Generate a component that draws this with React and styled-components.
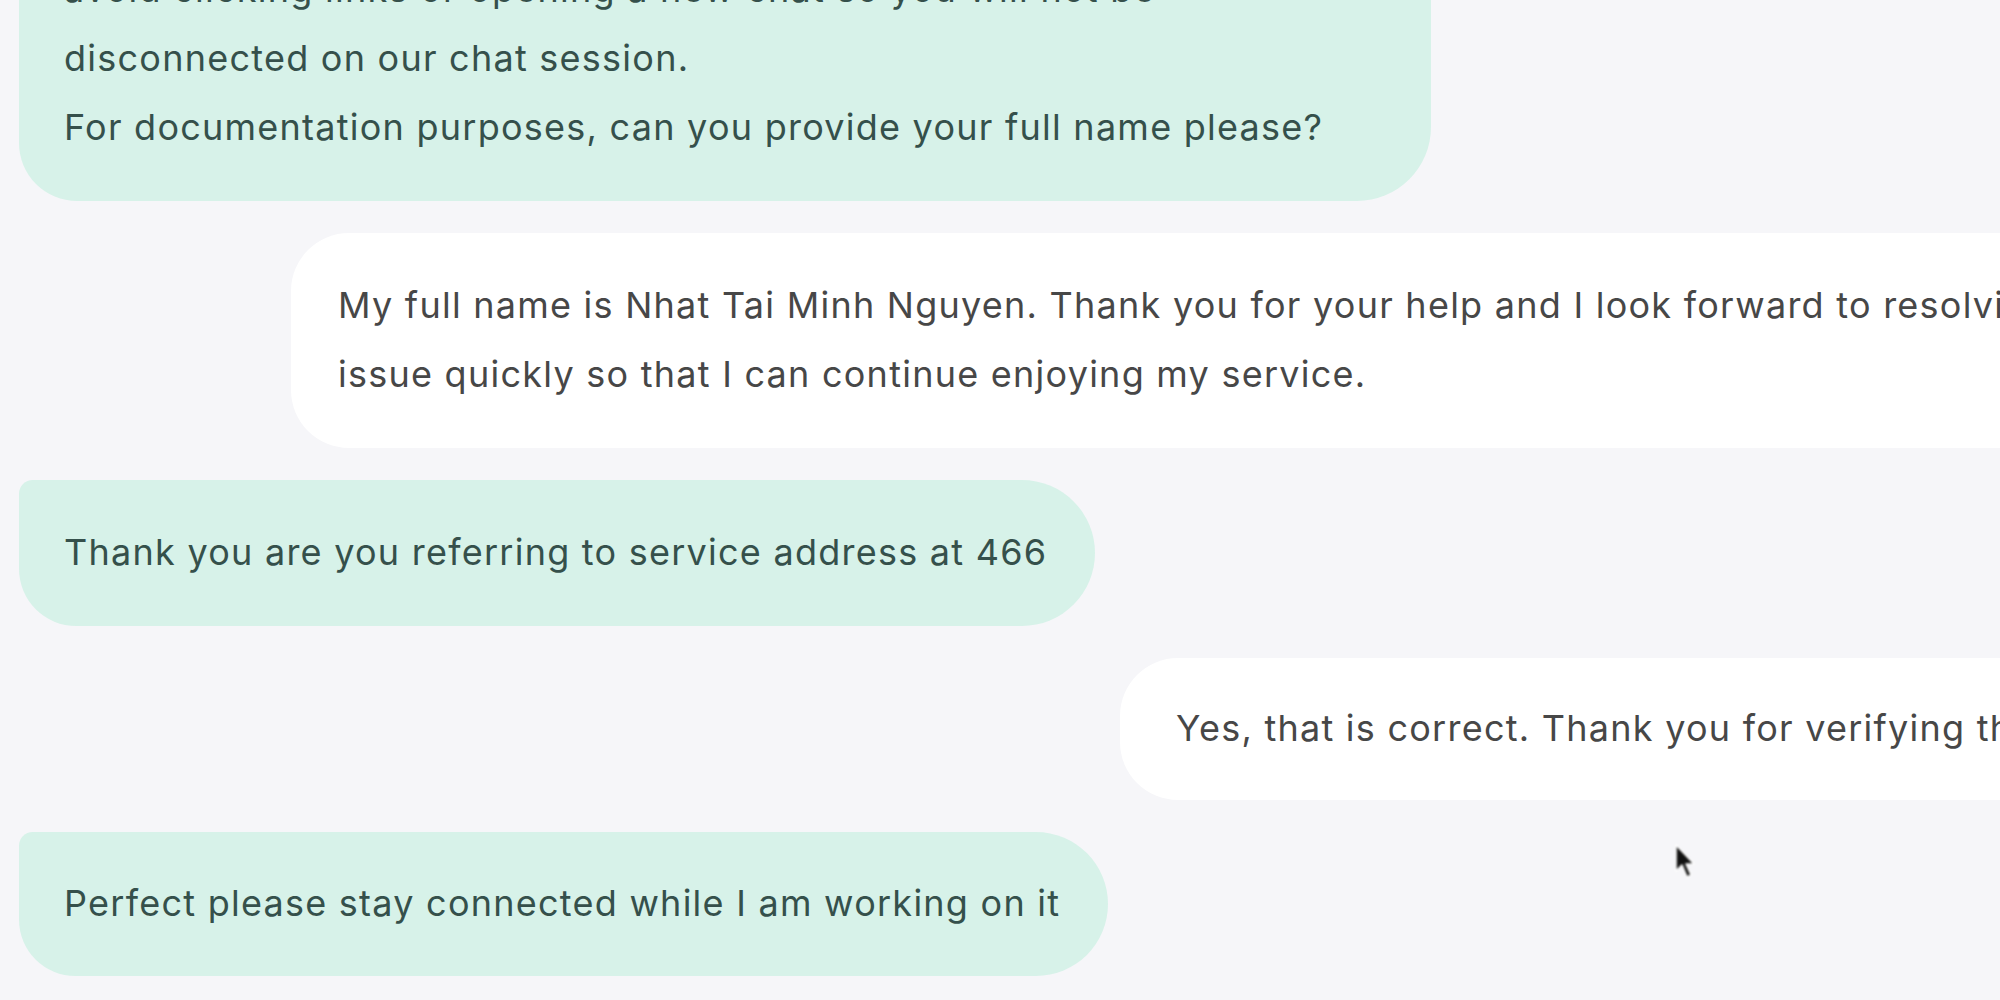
import React from "react";
import styled, { createGlobalStyle } from "styled-components";

const GlobalStyle = createGlobalStyle`
  html, body {
    margin: 0;
    padding: 0;
    background: #f6f6f9;
    overflow: hidden;
  }
  body {
    font-family: Inter, "Noto Sans", "DejaVu Sans", sans-serif;
  }
`;

const Screen = styled.div`
  position: relative;
  width: 2000px;
  height: 1000px;
  overflow: hidden;
  background: #f6f6f9;
`;

const Thread = styled.div`
  display: flex;
  flex-direction: column;
  gap: 32px;
  padding-left: 19px;
  margin-top: -83px;
`;

const Row = styled.div`
  display: flex;
  justify-content: flex-start;
  padding-left: ${(p) => p.$indent || 0}px;
`;

const Bubble = styled.div`
  flex-shrink: 0;
  box-sizing: border-box;
  max-width: ${(p) => (p.$agent ? "1412px" : "none")};
  font-size: 36px;
  line-height: 69px;
  letter-spacing: 1.25px;
  white-space: ${(p) => (p.$agent ? "normal" : "nowrap")};
  background: ${(p) => (p.$agent ? "#d7f2e9" : "#ffffff")};
  color: ${(p) => (p.$agent ? "#35504b" : "#474747")};
  border-radius: ${(p) => (p.$agent ? "14px 74px 74px 58px" : "58px 0 0 58px")};
  padding-right: 48px;
  padding-left: ${(p) => p.$pad || 45}px;
  padding-top: ${(p) => p.$py || 39}px;
  padding-bottom: ${(p) => (p.$py || 39) + 1}px;
`;

const Paragraph = styled.p`
  margin: 0;
`;

const Cursor = styled.svg`
  position: absolute;
  left: 1674px;
  top: 843px;
  width: 24px;
  height: 38px;
  filter: blur(0.8px);
`;

export default function App() {
  return (
    <Screen>
      <GlobalStyle />
      <Thread>
        <Row>
          <Bubble $agent $py={38}>
            <Paragraph>
              avoid clicking links or opening a new chat so you will not be disconnected on our chat session.
            </Paragraph>
            <Paragraph>For documentation purposes, can you provide your full name please?</Paragraph>
          </Bubble>
        </Row>
        <Row $indent={272}>
          <Bubble $pad={47} $py={38}>
            <Paragraph>
              My full name is Nhat Tai Minh Nguyen. Thank you for your help and I look forward to resolving this
            </Paragraph>
            <Paragraph>issue quickly so that I can continue enjoying my service.</Paragraph>
          </Bubble>
        </Row>
        <Row>
          <Bubble $agent $py={38}>
            <Paragraph>Thank you are you referring to service address at 466</Paragraph>
          </Bubble>
        </Row>
        <Row $indent={1101}>
          <Bubble $pad={56} $py={36}>
            <Paragraph>Yes, that is correct. Thank you for verifying the information.</Paragraph>
          </Bubble>
        </Row>
        <Row>
          <Bubble $agent $py={37}>
            <Paragraph>Perfect please stay connected while I am working on it</Paragraph>
          </Bubble>
        </Row>
      </Thread>
      <Cursor viewBox="0 0 24 38">
        <path d="M2 2 L2 28 L8 22 L13 34 L17 32 L12 21 L20 21 Z" fill="#111" stroke="#fff" strokeWidth="1.5" strokeLinejoin="round" />
      </Cursor>
    </Screen>
  );
}
